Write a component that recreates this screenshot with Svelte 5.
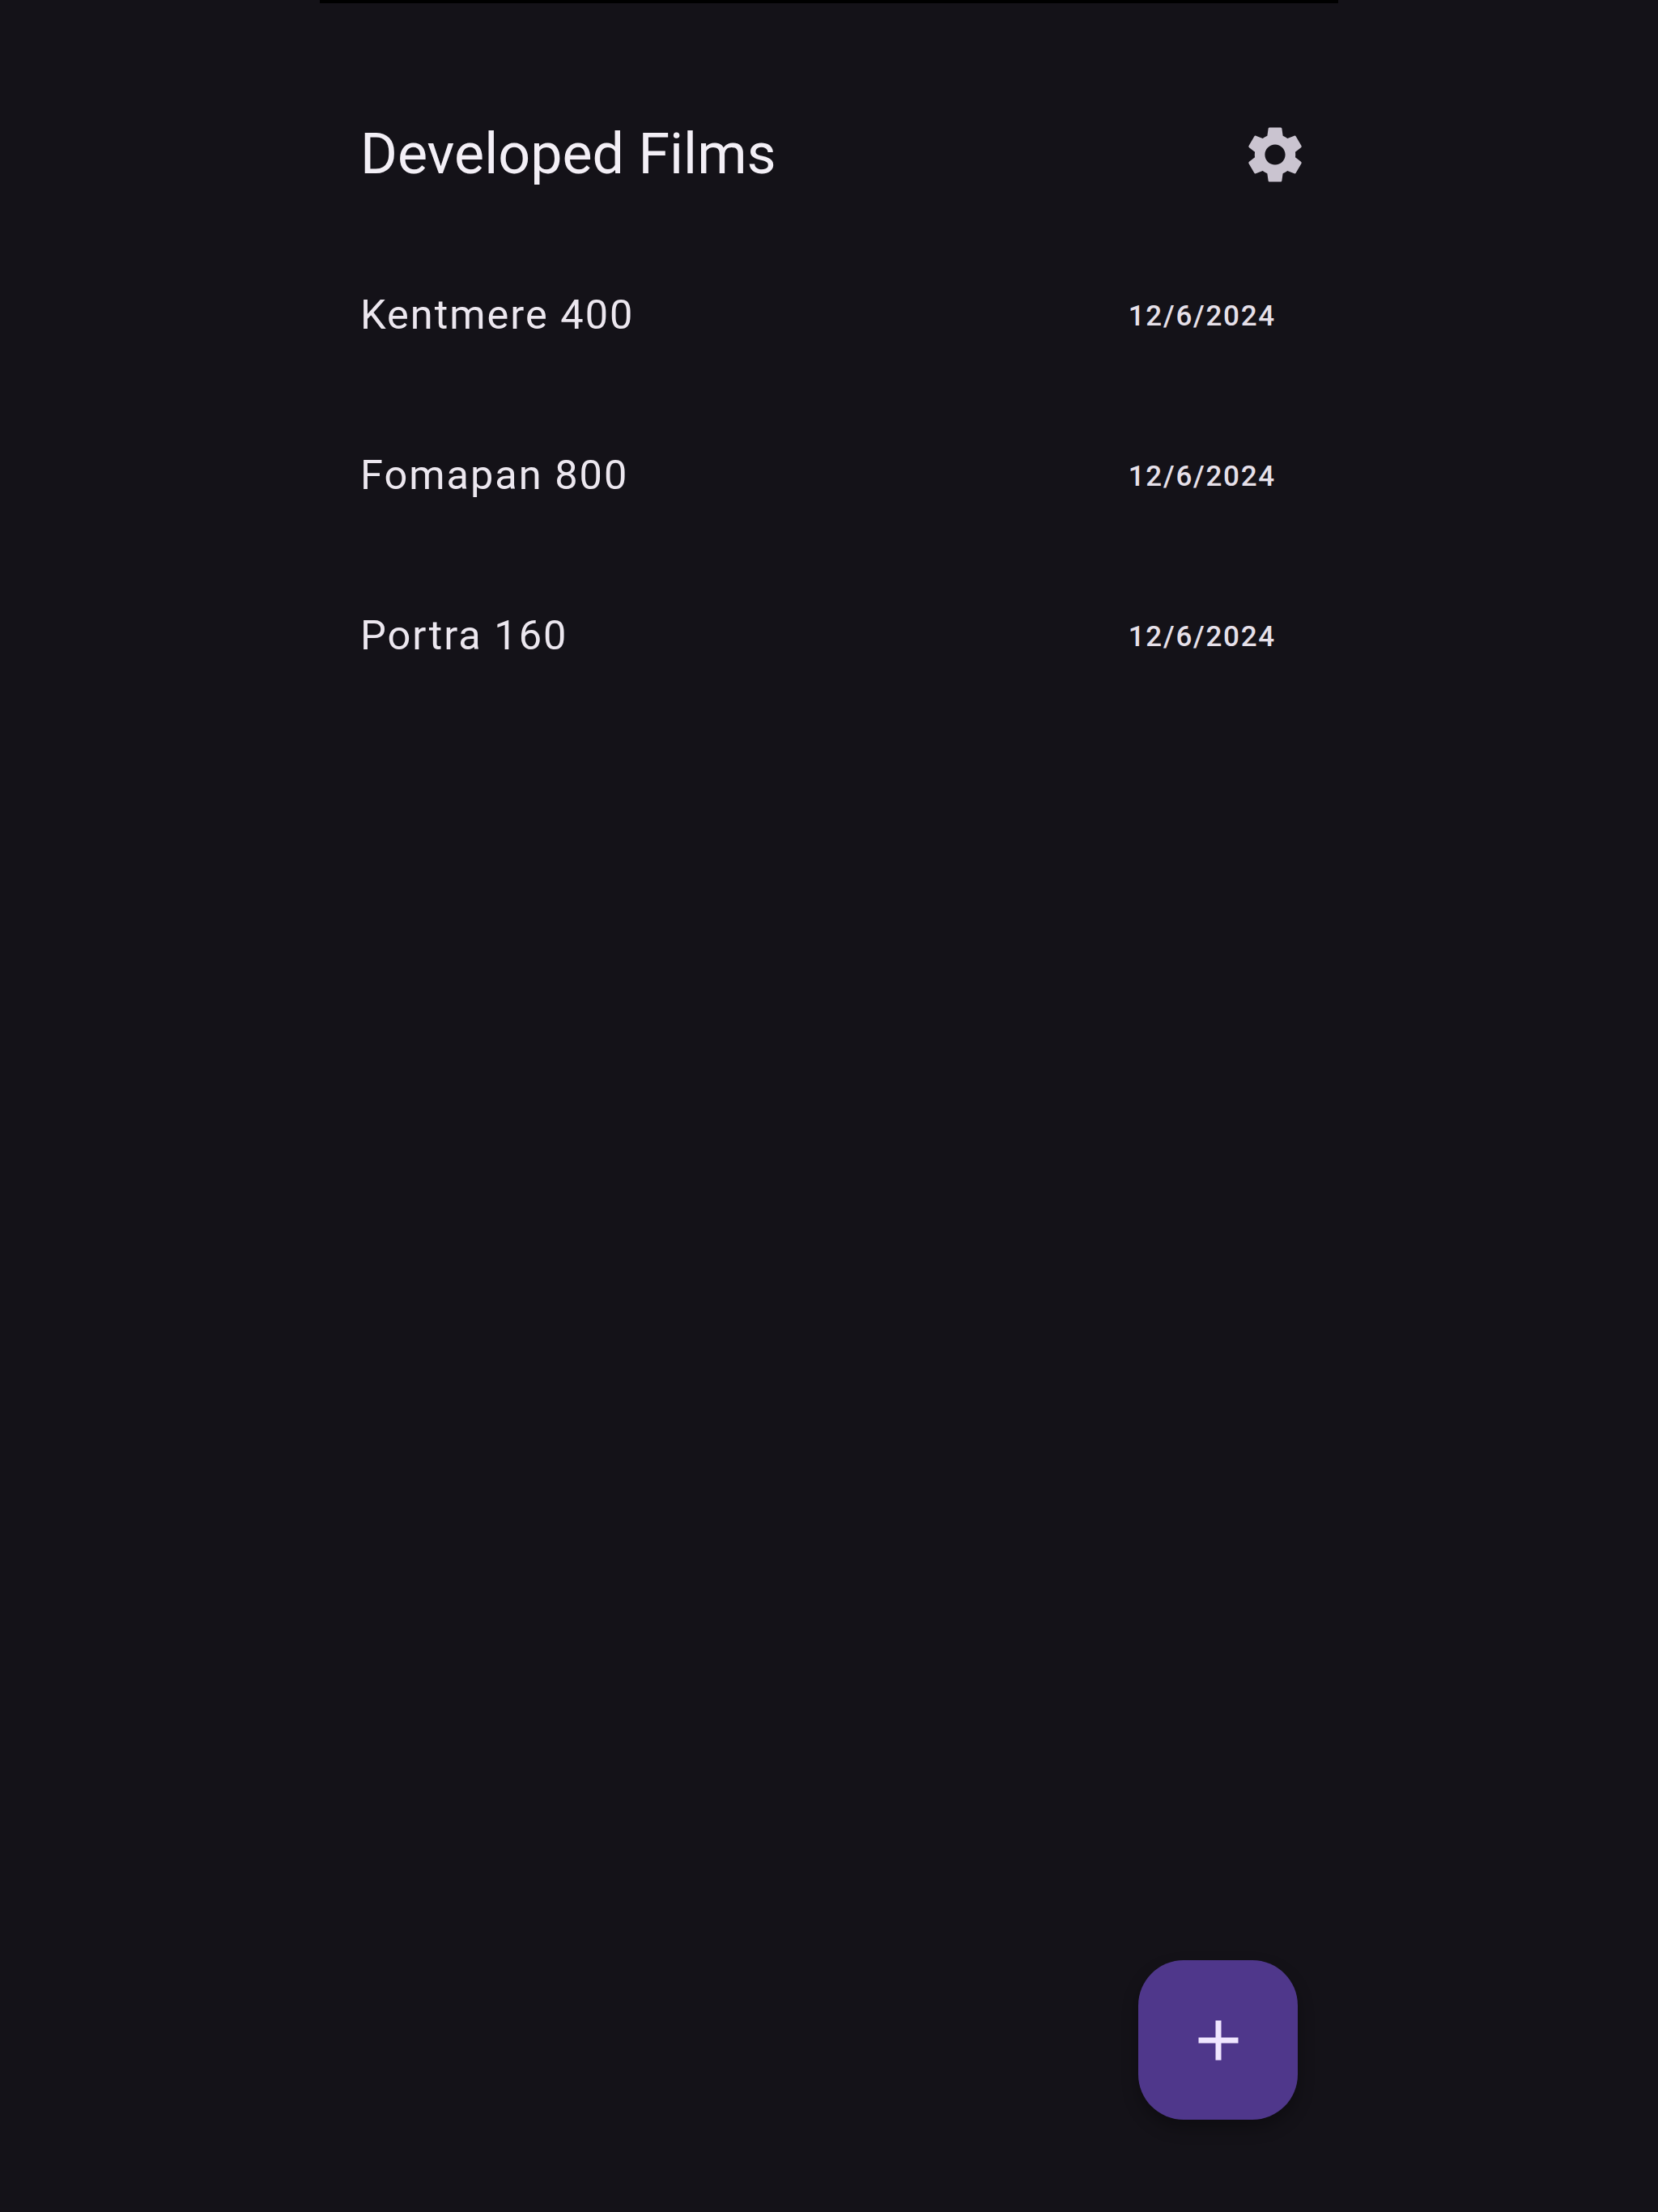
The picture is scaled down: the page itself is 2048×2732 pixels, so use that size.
<script>
  const films = [
    { name: 'Kentmere 400', date: '12/6/2024' },
    { name: 'Fomapan 800', date: '12/6/2024' },
    { name: 'Portra 160', date: '12/6/2024' }
  ];
</script>

<div class="page">
  <div class="screen">
    <div class="topLine"></div>

    <header class="header">
      <h1>Developed Films</h1>
      <button class="settings" aria-label="Settings">
        <svg viewBox="0 0 24 24" width="84" height="84">
          <path
            d="M19.14,12.94c0.04-0.3,0.06-0.61,0.06-0.94c0-0.32-0.02-0.64-0.07-0.94l2.03-1.58c0.18-0.14,0.23-0.41,0.12-0.61 l-1.92-3.32c-0.12-0.22-0.37-0.29-0.59-0.22l-2.39,0.96c-0.5-0.38-1.03-0.7-1.62-0.94L14.4,2.81c-0.04-0.24-0.24-0.41-0.48-0.41 h-3.84c-0.24,0-0.43,0.17-0.47,0.41L9.25,5.35C8.66,5.59,8.12,5.92,7.63,6.29L5.24,5.33c-0.22-0.08-0.47,0-0.59,0.22L2.74,8.87 C2.62,9.08,2.66,9.34,2.86,9.48l2.03,1.58C4.84,11.36,4.8,11.69,4.8,12s0.02,0.64,0.07,0.94l-2.03,1.58 c-0.18,0.14-0.23,0.41-0.12,0.61l1.92,3.32c0.12,0.22,0.37,0.29,0.59,0.22l2.39-0.96c0.5,0.38,1.03,0.7,1.62,0.94l0.36,2.54 c0.05,0.24,0.24,0.41,0.48,0.41h3.84c0.24,0,0.44-0.17,0.47-0.41l0.36-2.54c0.59-0.24,1.13-0.56,1.62-0.94l2.39,0.96 c0.22,0.08,0.47,0,0.59-0.22l1.92-3.32c0.12-0.22,0.07-0.47-0.12-0.61L19.14,12.94z M12,15.6c-1.98,0-3.6-1.62-3.6-3.6 s1.62-3.6,3.6-3.6s3.6,1.62,3.6,3.6S13.98,15.6,12,15.6z"
          />
        </svg>
      </button>
    </header>

    <ul class="list">
      {#each films as film}
        <li class="row">
          <span class="name">{film.name}</span>
          <span class="date">{film.date}</span>
        </li>
      {/each}
    </ul>

    <button class="fab" aria-label="Add film">
      <svg viewBox="0 0 24 24" width="84" height="84">
        <path d="M19 13h-6v6h-2v-6H5v-2h6V5h2v6h6v2z" />
      </svg>
    </button>
  </div>
</div>

<style>
  :global(body) {
    margin: 0;
    background: #141218;
  }

  .page {
    display: flex;
    justify-content: center;
    height: 2732px;
    background: #141218;
    font-family: Roboto, 'Liberation Sans', sans-serif;
    color: #e6e0e9;
    overflow: hidden;
  }

  .screen {
    position: relative;
    width: 1258px;
    height: 100%;
    display: flex;
    flex-direction: column;
  }

  .topLine {
    height: 4px;
    background: #000000;
  }

  .header {
    display: flex;
    justify-content: space-between;
    align-items: center;
    height: 120px;
    margin-top: 126px;
    padding: 0 36px 0 50px;
  }

  h1 {
    margin: 0;
    font-size: 70px;
    font-weight: 400;
    color: #f3eff6;
  }

  .settings {
    display: flex;
    padding: 2px 0 0;
    border: none;
    background: none;
  }

  .settings svg {
    fill: #cac4d0;
  }

  .list {
    list-style: none;
    margin: 40px 0 0;
    padding: 0 77px 0 50px;
    display: flex;
    flex-direction: column;
  }

  .row {
    display: flex;
    justify-content: space-between;
    align-items: center;
    height: 198px;
  }

  .name {
    font-size: 50.5px;
    letter-spacing: 2px;
    color: #ece7ef;
    padding-bottom: 1px;
  }

  .date {
    font-size: 35px;
    font-weight: 500;
    letter-spacing: 1.75px;
    color: #e6e0e9;
    padding-top: 2px;
  }

  .fab {
    position: absolute;
    left: 1011px;
    top: 2421px;
    width: 197px;
    height: 197px;
    display: flex;
    align-items: center;
    justify-content: center;
    padding: 0;
    border: none;
    border-radius: 56px;
    background: #4f378b;
    box-shadow: 0 10px 20px rgba(0, 0, 0, 0.3);
  }

  .fab svg {
    fill: #f0e6ff;
  }
</style>
